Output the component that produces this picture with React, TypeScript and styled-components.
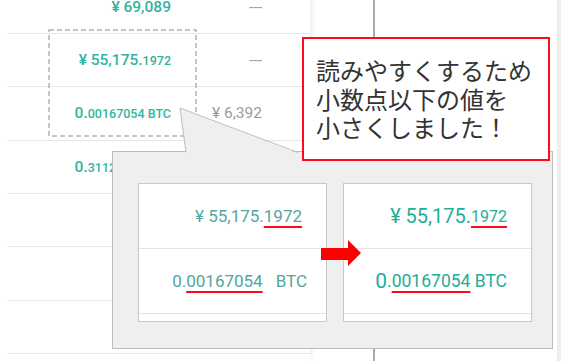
import React from 'react'
import styled, { createGlobalStyle } from 'styled-components'

const teal = '#30b4a0'
const red = '#ff0a1e'

const GlobalStyle = createGlobalStyle`
    html, body {
        margin: 0;
        padding: 0;
        background: #fff;
    }
    body {
        font-family: Roboto, 'Noto Sans', sans-serif;
        overflow: hidden;
    }
`

const Page = styled.div`
    position: relative;
    width: 561px;
    height: 361px;
    overflow: hidden;
    display: flex;
    background: #fff;
`

// background order table
const TablePanel = styled.div`
    width: 310px;
    flex: none;
    margin-top: -19.5px;
    box-shadow: 4px 0 6px -3px rgba(0, 0, 0, 0.1);
`

const Row = styled.div`
    display: grid;
    grid-template-columns: 164px 91px;
    align-items: center;
    margin-left: 7px;
    height: 53.4px;
    box-sizing: border-box;
    border-bottom: 1px solid #e6e6e6;
`

const Cell = styled.div<{ $muted?: boolean }>`
    text-align: right;
    white-space: nowrap;
    font-size: 15.5px;
    font-weight: ${p => (p.$muted ? 400 : 500)};
    color: ${p => (p.$muted ? '#9a9a9a' : teal)};
`

const Fraction = styled.span`
    font-size: 12.5px;
`

const Gutter = styled.div`
    width: 63px;
    flex: none;
`

const Rule = styled.div`
    width: 2px;
    flex: none;
    background: #a9a9a9;
`

const Blank = styled.div`
    flex: 1;
`

const ScrollEdge = styled.div`
    width: 4px;
    flex: none;
    background: #ededed;
`

// annotation layer
const DashedFrame = styled.svg`
    position: absolute;
    left: 48px;
    top: 29px;
`

const Bubble = styled.div`
    position: absolute;
    left: 112px;
    top: 151px;
    width: 441px;
    height: 198px;
    box-sizing: border-box;
    border: 1px solid #bdbdbd;
    background: #efefef;
    padding: 31px 20px 0 25px;
    display: flex;
    align-items: flex-start;
    gap: 16px;
`

const Pointer = styled.svg`
    position: absolute;
    left: 60px;
    top: -46px;
    overflow: visible;
`

const Card = styled.div`
    width: 189px;
    height: 139px;
    box-sizing: border-box;
    border: 1px solid #c9c9c9;
    background: #fff;
    display: flex;
    flex-direction: column;
`

const CardRow = styled.div<{ $pad: number; $tone: string }>`
    height: 65px;
    flex: none;
    box-sizing: border-box;
    border-bottom: 1px solid #e4e4e4;
    display: flex;
    align-items: center;
    justify-content: flex-end;
    padding-right: ${p => p.$pad}px;
    white-space: nowrap;
    font-size: 17px;
    color: ${p => p.$tone};
`

const Big = styled.span<{ $size: number }>`
    font-size: ${p => p.$size}px;
`

const Small = styled.span<{ $size: number }>`
    font-size: ${p => p.$size}px;
`

const Mark = styled.span`
    text-decoration: underline;
    text-decoration-color: ${red};
    text-decoration-thickness: 2px;
    text-underline-offset: 4px;
`

const Unit = styled.span`
    margin-left: 13px;
`

const Arrow = styled.svg`
    position: absolute;
    left: 208px;
    top: 88px;
`

const Note = styled.div`
    position: absolute;
    left: 302px;
    top: 37px;
    width: 248px;
    height: 124px;
    box-sizing: border-box;
    border: 2px solid ${red};
    background: #fff;
    padding: 17px 0 0 12px;
    font-family: 'Noto Sans CJK JP', 'Noto Sans', sans-serif;
    font-size: 24px;
    line-height: 28.5px;
    color: #333;
    white-space: nowrap;
`

const rows: [React.ReactNode, React.ReactNode][] = [
    ['¥ 69,089', '---'],
    [<>¥ 55,175.<Fraction>1972</Fraction></>, '---'],
    [<>0.<Fraction>00167054 BTC</Fraction></>, '¥ 6,392'],
    [<>0.<Fraction>31123650 BTC</Fraction></>, ''],
    ['', ''],
    ['', ''],
    ['', ''],
]

const App = () => (
    <>
        <GlobalStyle />
        <Page>
            <TablePanel>
                {rows.map(([amount, value], i) => (
                    <Row key={i}>
                        <Cell>{amount}</Cell>
                        <Cell $muted>{value}</Cell>
                    </Row>
                ))}
            </TablePanel>
            <Gutter />
            <Rule />
            <Blank />
            <ScrollEdge />

            <DashedFrame width="150" height="109">
                <rect x="1" y="1" width="147" height="106" fill="none" stroke="#b3b3b3" strokeWidth="1.5" strokeDasharray="5 3" />
            </DashedFrame>

            <Bubble>
                <Pointer width="130" height="48">
                    <polygon points="7,2 13,47.5 125,47.5" fill="#efefef" />
                    <polyline points="13,46.5 7,2 125,46.5" fill="none" stroke="#bdbdbd" strokeWidth="1" />
                </Pointer>
                <Card>
                    <CardRow $pad={24} $tone="#52a69e">
                        ¥ 55,175.<Mark>1972</Mark>
                    </CardRow>
                    <CardRow $pad={19} $tone="#52a69e">
                        0.<Mark>00167054</Mark>
                        <Unit>BTC</Unit>
                    </CardRow>
                </Card>
                <Card>
                    <CardRow $pad={24} $tone="#24ad99">
                        <Big $size={20}>¥ 55,175.</Big>
                        <Small $size={16}><Mark>1972</Mark></Small>
                    </CardRow>
                    <CardRow $pad={24} $tone="#24ad99">
                        <Big $size={21}>0</Big>
                        <Small $size={17.5}>.<Mark>00167054</Mark> BTC</Small>
                    </CardRow>
                </Card>
                <Arrow width="40" height="26">
                    <rect x="0" y="8" width="28" height="12" fill="#ff0000" />
                    <polygon points="27,0 40,13 27,26" fill="#ff0000" />
                </Arrow>
            </Bubble>

            <Note>
                読みやすくするため
                <br />
                小数点以下の値を
                <br />
                小さくしました！
            </Note>
        </Page>
    </>
)

export default App
